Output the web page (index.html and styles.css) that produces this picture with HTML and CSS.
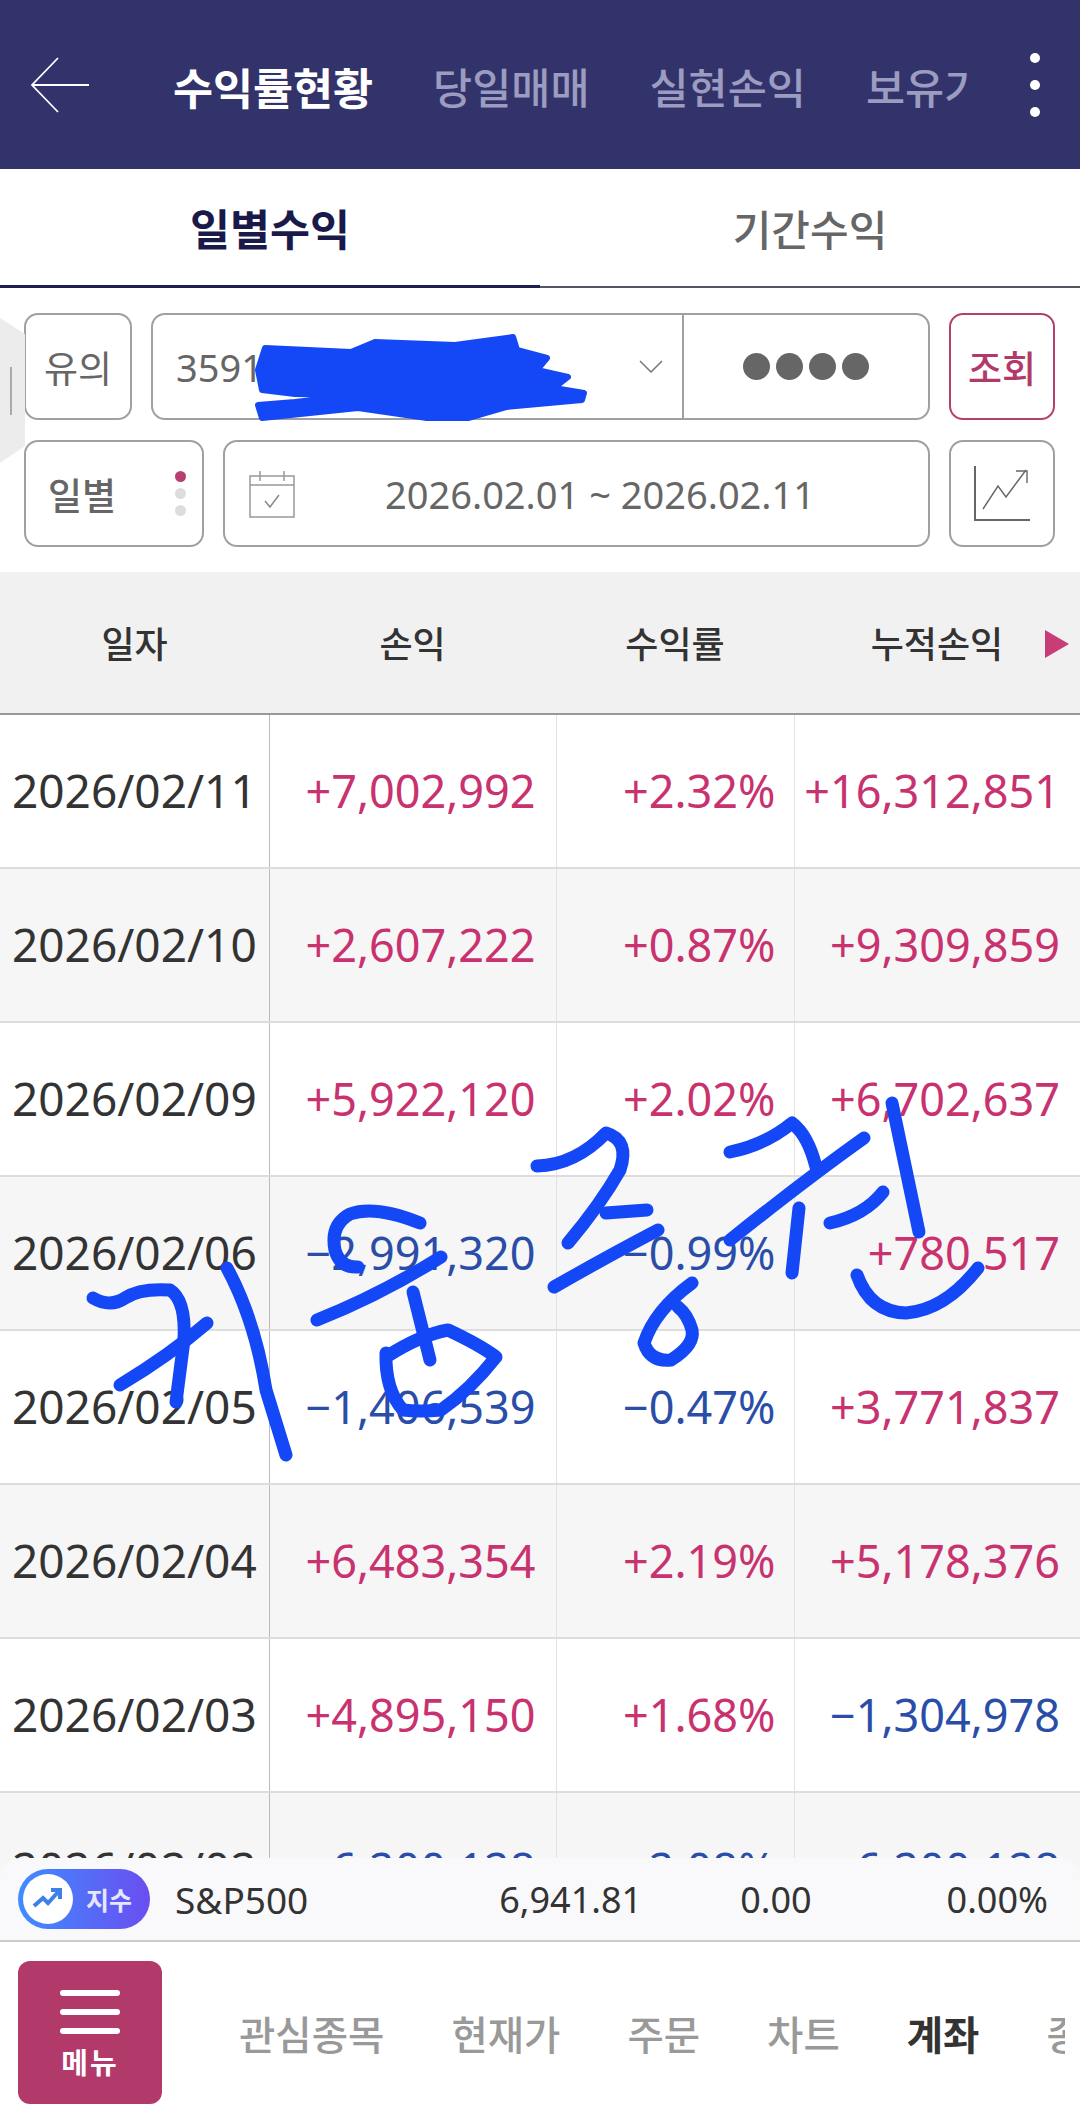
FILE: index.html
```html
<!DOCTYPE html>
<html lang="ko">

<head>
    <meta charset="UTF-8">
    <meta name="viewport" content="width=device-width, initial-scale=1.0">
    <title>수익률현황</title>
    <link rel="stylesheet" href="styles.css">
</head>

<body>
    <div class="page">
        <!-- 상단 헤더 -->
        <header class="header">
            <svg class="back-icon" width="60" height="56" viewBox="0 0 60 56">
                <path d="M28 1 L2 28 L28 55 M2 28 H59" fill="none" stroke="#fff" stroke-width="1.8" />
            </svg>
            <nav class="header-tabs">
                <span class="header-tab active">수익률현황</span>
                <span class="header-tab">당일매매</span>
                <span class="header-tab">실현손익</span>
                <span class="header-tab">보유기간</span>
            </nav>
            <div class="more-dots"><i></i><i></i><i></i></div>
        </header>

        <!-- 일별 / 기간 탭 -->
        <div class="sub-tabs">
            <div class="sub-tab active">일별수익</div>
            <div class="sub-tab">기간수익</div>
        </div>

        <!-- 조회 조건 -->
        <section class="form">
            <div class="side-handle"><i></i></div>
            <div class="form-row">
                <div class="box notice">유의</div>
                <div class="box account">
                    <div class="account-no">
                        <span>3591-</span>
                        <svg class="chevron" width="24" height="13" viewBox="0 0 24 13">
                            <path d="M1 1 L12 12 L23 1" fill="none" stroke="#777" stroke-width="1.5" />
                        </svg>
                    </div>
                    <div class="account-pw"><i></i><i></i><i></i><i></i></div>
                </div>
                <div class="box search">조회</div>
            </div>
            <div class="form-row">
                <div class="box period">
                    <span>일별</span>
                    <div class="period-dots"><i class="on"></i><i></i><i></i></div>
                </div>
                <div class="box dates">
                    <svg class="calendar" width="46" height="48" viewBox="0 0 46 48">
                        <g fill="none" stroke="#999" stroke-width="1.5">
                            <path d="M1 6 H45 V47 H1 Z M1 15 H45 M11 1 V11 M35 1 V11" />
                            <path d="M16 31 L21 37 L30 25" stroke="#888" />
                        </g>
                    </svg>
                    <span class="date-text">2026.02.01 ~ 2026.02.11</span>
                </div>
                <div class="box chart-btn">
                    <svg width="56" height="56" viewBox="0 0 56 56">
                        <path d="M1 0 V54 H56" fill="none" stroke="#666" stroke-width="2" />
                        <path d="M9 43 L24 20 L32 31 L52 4 M42 5 H53 V17" fill="none" stroke="#666" stroke-width="1.4" />
                    </svg>
                </div>
            </div>
        </section>

        <!-- 수익 표 -->
        <section class="table-wrap">
            <table class="profit-table">
                <colgroup>
                    <col class="col-date">
                    <col class="col-profit">
                    <col class="col-rate">
                    <col class="col-total">
                </colgroup>
                <thead>
                    <tr>
                        <th>일자</th>
                        <th>손익</th>
                        <th>수익률</th>
                        <th class="th-last">누적손익<i class="next-arrow"></i></th>
                    </tr>
                </thead>
                <tbody>
                    <tr><td>2026/02/11</td><td class="up">+7,002,992</td><td class="up rate">+2.32%</td><td class="up">+16,312,851</td></tr>
                    <tr><td>2026/02/10</td><td class="up">+2,607,222</td><td class="up rate">+0.87%</td><td class="up">+9,309,859</td></tr>
                    <tr><td>2026/02/09</td><td class="up">+5,922,120</td><td class="up rate">+2.02%</td><td class="up">+6,702,637</td></tr>
                    <tr><td>2026/02/06</td><td class="down">−2,991,320</td><td class="down rate">−0.99%</td><td class="up">+780,517</td></tr>
                    <tr><td>2026/02/05</td><td class="down">−1,406,539</td><td class="down rate">−0.47%</td><td class="up">+3,771,837</td></tr>
                    <tr><td>2026/02/04</td><td class="up">+6,483,354</td><td class="up rate">+2.19%</td><td class="up">+5,178,376</td></tr>
                    <tr><td>2026/02/03</td><td class="up">+4,895,150</td><td class="up rate">+1.68%</td><td class="down">−1,304,978</td></tr>
                    <tr><td>2026/02/02</td><td class="down">−6,200,128</td><td class="down rate">−2.08%</td><td class="down">−6,200,128</td></tr>
                </tbody>
            </table>
        </section>

        <!-- 지수 바 -->
        <div class="index-bar">
            <div class="index-pill">
                <span class="index-icon">
                    <svg width="32" height="24" viewBox="0 0 32 24">
                        <path d="M2 19 L11 11 L16 16 L27 4 M19 3 H28 V12" fill="none" stroke="#3f7fe8" stroke-width="4" />
                    </svg>
                </span>
                <span class="index-label">지수</span>
            </div>
            <span class="index-name">S&amp;P500</span>
            <span class="index-price">6,941.81</span>
            <span class="index-diff">0.00</span>
            <span class="index-rate">0.00%</span>
        </div>

        <!-- 하단 메뉴 -->
        <footer class="bottom-nav">
            <div class="menu-btn">
                <i></i><i></i><i></i>
                <span>메뉴</span>
            </div>
            <nav class="bottom-tabs">
                <span class="bottom-tab">관심종목</span>
                <span class="bottom-tab">현재가</span>
                <span class="bottom-tab">주문</span>
                <span class="bottom-tab">차트</span>
                <span class="bottom-tab active">계좌</span>
                <span class="bottom-tab">종합</span>
            </nav>
        </footer>

        <!-- 손글씨 덧칠 -->
        <svg class="scribble" width="1080" height="2123" viewBox="0 0 1080 2123">
            <path class="mask" d="M265 348 L351 352 L375 342 L455 345 L513 337 L517 350 L547 358 L537 370 L568 377 L554 388 L584 393 L582 400 L506 407 L468 418 L427 418 L358 408 L262 418 L258 405 L295 402 L358 395 L295 394 L262 390 L258 370 Z" />
            <g class="pen">
                <!-- 기 -->
                <path d="M93 1298 Q110 1308 125 1298 T170 1290 Q186 1300 184 1340 L176 1402" />
                <path d="M207 1323 Q170 1355 120 1385" />
                <path d="M227 1268 Q255 1320 266 1390 L286 1455" />
                <!-- 움 -->
                <path d="M420 1223 Q375 1205 350 1214 Q330 1225 335 1250 Q340 1268 358 1267" />
                <path d="M441 1257 Q380 1295 317 1320" />
                <path d="M413 1292 L430 1360" />
                <path d="M386 1357 Q420 1335 448 1330 Q480 1345 496 1357 Q470 1390 441 1410 Q420 1412 403 1410 Q385 1390 386 1353" />
                <!-- 증 -->
                <path d="M537 1166 Q575 1165 606 1133 Q630 1140 620 1170 Q600 1205 568 1243" />
                <path d="M606 1213 L647 1210" />
                <path d="M658 1230 Q610 1255 554 1287" />
                <path d="M692 1283 Q655 1310 644 1343 Q650 1362 671 1360 Q695 1345 692 1330 Q688 1315 678 1307" />
                <!-- 권 -->
                <path d="M730 1152 Q765 1145 792 1123 Q808 1135 816 1167" />
                <path d="M864 1138 Q805 1180 730 1240" />
                <path d="M799 1208 L792 1273" />
                <path d="M830 1223 Q865 1215 883 1192" />
                <path d="M892 1103 Q905 1165 919 1232" />
                <path d="M857 1275 Q870 1312 906 1313 Q945 1310 978 1268" />
            </g>
        </svg>
    </div>
</body>

</html>
```

FILE: styles.css
```css
* {
    box-sizing: border-box;
}

body {
    margin: 0;
    background-color: #fff;
    font-family: "Noto Sans", "Noto Sans CJK KR", sans-serif;
}

i {
    display: block;
}

.page {
    position: relative;
    display: flex;
    flex-direction: column;
    width: 1080px;
    height: 2123px;
    overflow: hidden;
}

/* 헤더 */
.header {
    display: flex;
    align-items: center;
    flex: none;
    height: 169px;
    padding-left: 30px;
    background-color: #33336b;
}

.back-icon {
    flex: none;
    margin-right: 83px;
}

.header-tabs {
    display: flex;
    gap: 60px;
    width: 796px;
    padding-top: 4px;
    overflow: hidden;
    white-space: nowrap;
}

.header-tab {
    color: #9b9cc0;
    font-size: 42.5px;
    font-weight: 500;
}

.header-tab.active {
    color: #fff;
    font-size: 43.5px;
    font-weight: 700;
}

.more-dots {
    display: flex;
    flex-direction: column;
    gap: 17px;
    margin-left: 61px;
}

.more-dots i {
    width: 10px;
    height: 10px;
    border-radius: 50%;
    background-color: #fff;
}

/* 일별 / 기간 탭 */
.sub-tabs {
    display: flex;
    flex: none;
    height: 119px;
}

.sub-tab {
    display: flex;
    flex: 1;
    align-items: center;
    justify-content: center;
    border-bottom: 2px solid #55555f;
    color: #666;
    font-size: 42px;
    font-weight: 500;
}

.sub-tab.active {
    border-bottom: 3px solid #1f1f4f;
    color: #1a1a4a;
    font-size: 43.5px;
    font-weight: 700;
}

/* 조회 조건 */
.form {
    position: relative;
    display: flex;
    flex-direction: column;
    flex: none;
    gap: 19px;
    padding: 25px 25px 25px 24px;
}

.form-row {
    display: flex;
    gap: 19px;
    height: 107px;
}

.form-row + .form-row {
    margin-top: 1px;
}

.box {
    display: flex;
    align-items: center;
    justify-content: center;
    border: 2px solid #a0a0a0;
    border-radius: 14px;
    color: #666;
    font-size: 37px;
}

.side-handle {
    position: absolute;
    top: 30px;
    left: 0;
    display: flex;
    align-items: center;
    width: 25px;
    height: 145px;
    padding-left: 10px;
    background-color: #ececec;
    clip-path: polygon(0 0, 100% 16px, 100% 128px, 0 100%);
}

.side-handle i {
    width: 2px;
    height: 48px;
    background-color: #aaa;
}

.notice {
    width: 108px;
}

.account {
    flex: 1;
    align-items: stretch;
}

.account-no {
    display: flex;
    align-items: center;
    justify-content: space-between;
    width: 531px;
    padding: 0 19px 0 23px;
    border-right: 2px solid #a0a0a0;
}

.account-no span {
    font-size: 38px;
}

.account-pw {
    display: flex;
    flex: 1;
    align-items: center;
    justify-content: center;
    gap: 6px;
}

.account-pw i {
    width: 27px;
    height: 27px;
    border-radius: 50%;
    background-color: #666;
}

.search {
    width: 106px;
    border-color: #b5406f;
    color: #b23a6b;
    font-weight: 500;
}

.period {
    justify-content: flex-start;
    gap: 59px;
    width: 180px;
    padding-left: 22px;
    font-weight: 500;
}

.period-dots {
    display: flex;
    flex-direction: column;
    gap: 6px;
}

.period-dots i {
    width: 11px;
    height: 11px;
    border-radius: 50%;
    background-color: #ddd;
}

.period-dots i.on {
    background-color: #b5406f;
}

.dates {
    flex: 1;
    justify-content: flex-start;
    padding-left: 24px;
}

.date-text {
    margin-left: 90px;
    font-size: 38px;
    white-space: nowrap;
}

.chart-btn {
    width: 106px;
}

/* 수익 표 */
.table-wrap {
    flex: 1;
    min-height: 0;
    overflow: hidden;
}

.profit-table {
    width: 1080px;
    border-collapse: collapse;
    table-layout: fixed;
}

.col-date {
    width: 269px;
}

.col-profit {
    width: 287px;
}

.col-rate {
    width: 238px;
}

.col-total {
    width: 286px;
}

.profit-table th {
    position: relative;
    height: 142px;
    padding: 0;
    border-bottom: 2px solid #999;
    background-color: #f1f1f1;
    color: #333;
    font-size: 36px;
    font-weight: 500;
}

.next-arrow {
    position: absolute;
    top: 58px;
    right: 11px;
    width: 0;
    height: 0;
    border-top: 14px solid transparent;
    border-bottom: 14px solid transparent;
    border-left: 24px solid #c83c78;
}

.profit-table td {
    height: 154px;
    padding: 0 20px 2px 0;
    border-right: 1px solid #e2e2e2;
    border-bottom: 2px solid #ddd;
    font-size: 45px;
    text-align: right;
    white-space: nowrap;
}

.profit-table td:first-child {
    padding: 0 0 2px 12px;
    border-right: 1px solid #bbb;
    color: #333;
    font-size: 46px;
    text-align: left;
}

.profit-table td.rate {
    padding-right: 18px;
}

.profit-table td:last-child {
    border-right: 0;
}

.profit-table tbody tr:nth-child(even) {
    background-color: #f6f6f6;
}

.up {
    color: #c8326f;
}

.down {
    color: #2a4ea8;
}

/* 지수 바 */
.index-bar {
    position: relative;
    display: flex;
    align-items: center;
    flex: none;
    height: 84px;
    margin-top: -20px;
    padding-left: 18px;
    border-bottom: 2px solid #ccc;
    border-radius: 20px 20px 0 0;
    background-color: #f9f9fb;
    color: #333;
    font-size: 36px;
}

.index-pill {
    display: flex;
    align-items: center;
    flex: none;
    width: 132px;
    height: 60px;
    padding-left: 5px;
    border-radius: 30px;
    background: linear-gradient(90deg, #3f8cff, #6a4ef0);
}

.index-icon {
    display: flex;
    align-items: center;
    justify-content: center;
    width: 50px;
    height: 50px;
    border-radius: 50%;
    background-color: #fff;
}

.index-label {
    margin-left: 13px;
    color: #e6e6ff;
    font-size: 25px;
    font-weight: 700;
}

.index-name {
    margin-left: 25px;
    font-size: 37px;
}

.index-price {
    margin-left: 191px;
}

.index-diff {
    margin-left: 98px;
}

.index-rate {
    margin-left: 135px;
}

/* 하단 메뉴 */
.bottom-nav {
    display: flex;
    align-items: center;
    flex: none;
    height: 181px;
    padding: 0 15px 0 18px;
    background-color: #fff;
}

.menu-btn {
    display: flex;
    flex-direction: column;
    align-items: center;
    flex: none;
    width: 144px;
    height: 143px;
    padding-top: 29px;
    border-radius: 12px;
    background-color: #b23a6b;
    color: #fff;
}

.menu-btn i {
    width: 60px;
    height: 6px;
    margin-bottom: 13px;
    border-radius: 3px;
    background-color: #fff;
}

.menu-btn span {
    margin-top: -4px;
    font-size: 29px;
    font-weight: 700;
    letter-spacing: 2px;
    line-height: 40px;
}

.bottom-tabs {
    display: flex;
    flex: 1;
    gap: 67px;
    margin-left: 77px;
    overflow: hidden;
    white-space: nowrap;
}

.bottom-tab {
    color: #999;
    font-size: 39.5px;
    font-weight: 500;
}

.bottom-tab.active {
    color: #333;
    font-weight: 700;
}

/* 손글씨 덧칠 */
.scribble {
    position: absolute;
    top: 0;
    left: 0;
    pointer-events: none;
}

.mask {
    fill: #1447f5;
    stroke: #1447f5;
    stroke-width: 6px;
    stroke-linejoin: round;
}

.pen {
    fill: none;
    stroke: #1447f5;
    stroke-width: 13px;
    stroke-linecap: round;
    stroke-linejoin: round;
}
```
